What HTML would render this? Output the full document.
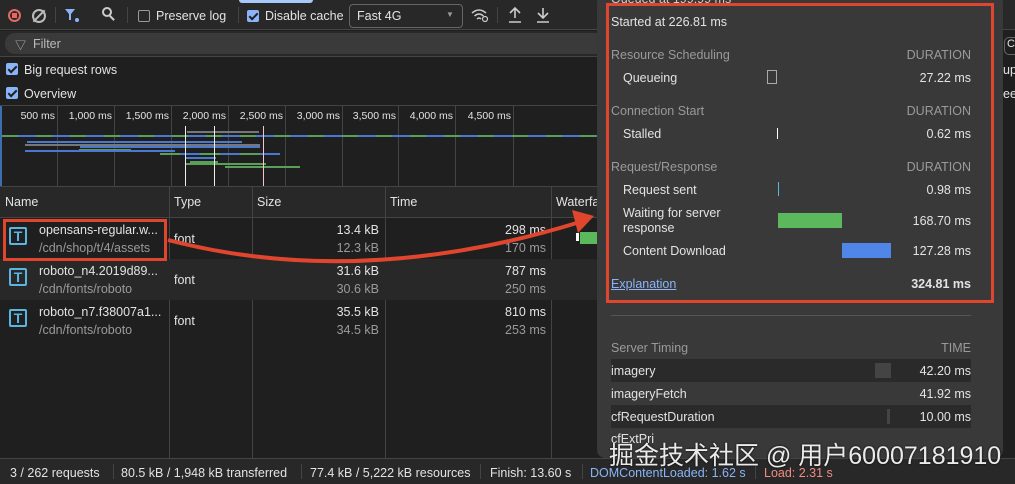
<!DOCTYPE html>
<html><head><meta charset="utf-8"><style>
*{box-sizing:border-box;margin:0;padding:0}
body{width:1015px;height:484px;overflow:hidden;background:#1f1f1f;font-family:"Liberation Sans","Noto Sans CJK SC",sans-serif;font-size:12.5px;color:#e3e3e3;position:relative}
.a{position:absolute;white-space:nowrap}
.r{position:absolute;white-space:nowrap;text-align:right}
.vl{position:absolute;width:1px;background:#444}
.hl{position:absolute;height:1px;background:#444}
.cb{position:absolute;width:12px;height:12px;border-radius:2px;background:#8ab4f8}
.cb:after{content:"";position:absolute;left:4px;top:1px;width:3px;height:7px;border:solid #1f1f1f;border-width:0 2px 2px 0;transform:rotate(45deg)}
.ic{position:absolute;width:18px;height:18px;border:2px solid #5bb5e0;border-radius:2px;color:#5bb5e0;font-weight:bold;font-size:14px;text-align:center;line-height:14px}
.g{color:#9a9a9a}
.bar{position:absolute;height:2px}
</style></head><body>
<div class="a" style="left:0;top:0;width:1015px;height:30px;background:#282828;border-bottom:1px solid #444"></div>
<div class="a" style="left:239px;top:0;width:74px;height:3px;background:#a8c7fa;border-radius:0 0 4px 4px"></div>
<div class="a" style="left:8px;top:9px;width:13px;height:13px;border-radius:50%;border:2px solid #e46962"></div>
<div class="a" style="left:12px;top:13px;width:5px;height:5px;background:#e46962"></div>
<div class="a" style="left:32px;top:9px;width:14px;height:14px;border-radius:50%;border:2px solid #bbb"></div>
<div class="a" style="left:38px;top:8px;width:2px;height:16px;background:#bbb;transform:rotate(45deg)"></div>
<div class="vl" style="left:55px;top:7px;height:16px"></div>
<svg class="a" style="left:64px;top:8px" width="16" height="16"><path d="M1 1 H11 L7 6 V12 L5 12 V6 Z" fill="#8ab4f8"/><circle cx="13" cy="12" r="2" fill="#8ab4f8"/></svg>
<div class="a" style="left:102px;top:7px;width:10px;height:10px;border-radius:50%;border:2px solid #ccc"></div>
<div class="a" style="left:111px;top:15px;width:2px;height:6px;background:#ccc;transform:rotate(-45deg)"></div>
<div class="vl" style="left:127px;top:7px;height:16px"></div>
<div class="a" style="left:138px;top:10px;width:12px;height:12px;border:1px solid #999;border-radius:2px"></div>
<div class="a" style="left:156px;top:9px">Preserve log</div>
<div class="vl" style="left:238px;top:7px;height:16px"></div>
<div class="cb" style="left:247px;top:10px"></div>
<div class="a" style="left:265px;top:9px">Disable cache</div>
<div class="a" style="left:349px;top:4px;width:114px;height:24px;border:1px solid #666;border-radius:4px"></div>
<div class="a" style="left:357px;top:9px">Fast 4G</div>
<div class="a" style="left:446px;top:10px;font-size:8px;color:#999">▼</div>
<svg class="a" style="left:470px;top:7px" width="20" height="16"><path d="M2 6 Q9 0 16 6 M4.5 9 Q9 5 13.5 9 M7 12 Q9 10 11 12" fill="none" stroke="#ccc" stroke-width="1.5"/><circle cx="15" cy="12" r="2.5" fill="none" stroke="#ccc" stroke-width="1.2"/></svg>
<div class="vl" style="left:497px;top:7px;height:16px"></div>
<svg class="a" style="left:507px;top:6px" width="16" height="18"><path d="M8 2 V12 M3 7 L8 2 L13 7 M2 16 H14" fill="none" stroke="#ccc" stroke-width="1.6"/></svg>
<svg class="a" style="left:535px;top:6px" width="16" height="18"><path d="M8 2 V12 M3 7 L8 12 L13 7 M2 16 H14" fill="none" stroke="#ccc" stroke-width="1.6"/></svg>
<div class="a" style="left:0;top:31px;width:1015px;height:26px;background:#282828;border-bottom:1px solid #444"></div>
<div class="a" style="left:5px;top:33px;width:600px;height:21px;background:#3a3a3a;border-radius:10px"></div>
<div class="a" style="left:15px;top:37px;color:#bbb;font-size:11px">▽</div>
<div class="a" style="left:33px;top:37px;color:#bbb">Filter</div>
<div class="cb" style="left:6px;top:63px"></div>
<div class="a" style="left:24px;top:63px">Big request rows</div>
<div class="cb" style="left:6px;top:87px"></div>
<div class="a" style="left:24px;top:87px">Overview</div>
<div class="hl" style="left:0;top:105px;width:600px"></div>
<div class="a" style="left:0;top:106px;width:2px;height:80px;background:#3b6fb0"></div>
<div class="vl" style="left:57px;top:106px;height:80px"></div>
<div class="vl" style="left:114px;top:106px;height:80px"></div>
<div class="vl" style="left:171px;top:106px;height:80px"></div>
<div class="vl" style="left:228px;top:106px;height:80px"></div>
<div class="vl" style="left:285px;top:106px;height:80px"></div>
<div class="vl" style="left:342px;top:106px;height:80px"></div>
<div class="vl" style="left:398px;top:106px;height:80px"></div>
<div class="vl" style="left:455px;top:106px;height:80px"></div>
<div class="vl" style="left:513px;top:106px;height:80px"></div>
<div class="r" style="right:960px;top:110px;font-size:10.5px">500 ms</div>
<div class="r" style="right:903px;top:110px;font-size:10.5px">1,000 ms</div>
<div class="r" style="right:846px;top:110px;font-size:10.5px">1,500 ms</div>
<div class="r" style="right:789px;top:110px;font-size:10.5px">2,000 ms</div>
<div class="r" style="right:732px;top:110px;font-size:10.5px">2,500 ms</div>
<div class="r" style="right:675px;top:110px;font-size:10.5px">3,000 ms</div>
<div class="r" style="right:619px;top:110px;font-size:10.5px">3,500 ms</div>
<div class="r" style="right:562px;top:110px;font-size:10.5px">4,000 ms</div>
<div class="r" style="right:504px;top:110px;font-size:10.5px">4,500 ms</div>
<div class="bar" style="left:2px;top:135px;width:598px;background:repeating-linear-gradient(90deg,#5a9e5a 0 16px,#4a78d0 16px 34px)"></div>
<div class="bar" style="left:187px;top:131px;width:72px;background:#777"></div>
<div class="bar" style="left:27px;top:141px;width:215px;background:#4a78d0"></div>
<div class="bar" style="left:25px;top:144px;width:235px;background:#777"></div>
<div class="bar" style="left:80px;top:146px;width:180px;background:#4a78d0"></div>
<div class="bar" style="left:79px;top:149px;width:52px;background:#5a9e5a"></div>
<div class="bar" style="left:25px;top:150px;width:150px;background:#4a78d0"></div>
<div class="bar" style="left:160px;top:153px;width:120px;background:repeating-linear-gradient(90deg,#5a9e5a 0 20px,#4a78d0 20px 40px)"></div>
<div class="bar" style="left:186px;top:157px;width:30px;background:#4a78d0"></div>
<div class="bar" style="left:190px;top:161px;width:28px;background:#5a9e5a"></div>
<div class="bar" style="left:186px;top:163px;width:80px;background:#5a9e5a"></div>
<div class="bar" style="left:225px;top:166px;width:75px;background:#5a9e5a"></div>
<div class="a" style="left:185px;top:126px;width:1px;height:60px;background:#eee"></div>
<div class="a" style="left:214px;top:126px;width:1px;height:60px;background:#eee"></div>
<div class="a" style="left:263px;top:126px;width:1px;height:60px;background:#f4c7c7"></div>
<div class="hl" style="left:0;top:186px;width:600px"></div>
<div class="a" style="left:0;top:187px;width:600px;height:31px;background:#282828;border-bottom:1px solid #444"></div>
<div class="vl" style="left:169px;top:187px;height:278px"></div>
<div class="vl" style="left:252px;top:187px;height:278px"></div>
<div class="vl" style="left:385px;top:187px;height:278px"></div>
<div class="vl" style="left:551px;top:187px;height:278px"></div>
<div class="a" style="left:5px;top:195px">Name</div>
<div class="a" style="left:174px;top:195px">Type</div>
<div class="a" style="left:257px;top:195px">Size</div>
<div class="a" style="left:390px;top:195px">Time</div>
<div class="a" style="left:556px;top:195px">Waterfa</div>
<div class="a" style="left:0;top:259px;width:600px;height:41px;background:#282828"></div>
<div class="ic" style="left:9px;top:227px">T</div>
<div class="a" style="left:39px;top:223px">opensans-regular.w...</div>
<div class="a g" style="left:39px;top:241px">/cdn/shop/t/4/assets</div>
<div class="a" style="left:174px;top:232px">font</div>
<div class="r" style="right:636px;top:223px">13.4 kB</div>
<div class="r g" style="right:636px;top:241px">12.3 kB</div>
<div class="r" style="right:469px;top:223px">298 ms</div>
<div class="r g" style="right:469px;top:241px">170 ms</div>
<div class="a" style="left:576px;top:233px;width:3px;height:8px;background:#fff"></div>
<div class="a" style="left:580px;top:232px;width:20px;height:12px;background:#5cb85c"></div>
<div class="ic" style="left:9px;top:268px">T</div>
<div class="a" style="left:39px;top:264px">roboto_n4.2019d89...</div>
<div class="a g" style="left:39px;top:282px">/cdn/fonts/roboto</div>
<div class="a" style="left:174px;top:273px">font</div>
<div class="r" style="right:636px;top:264px">31.6 kB</div>
<div class="r g" style="right:636px;top:282px">30.6 kB</div>
<div class="r" style="right:469px;top:264px">787 ms</div>
<div class="r g" style="right:469px;top:282px">250 ms</div>
<div class="ic" style="left:9px;top:309px">T</div>
<div class="a" style="left:39px;top:305px">roboto_n7.f38007a1...</div>
<div class="a g" style="left:39px;top:323px">/cdn/fonts/roboto</div>
<div class="a" style="left:174px;top:314px">font</div>
<div class="r" style="right:636px;top:305px">35.5 kB</div>
<div class="r g" style="right:636px;top:323px">34.5 kB</div>
<div class="r" style="right:469px;top:305px">810 ms</div>
<div class="r g" style="right:469px;top:323px">253 ms</div>
<div class="a" style="left:3px;top:219px;width:164px;height:42px;border:3px solid #e0452e"></div>
<div class="a" style="left:0;top:458px;width:1015px;height:26px;background:#282828;border-top:1px solid #444"></div>
<div class="a" style="left:10px;top:466px">3 / 262 requests</div>
<div class="vl" style="left:113px;top:464px;height:15px"></div>
<div class="a" style="left:121px;top:466px">80.5 kB / 1,948 kB transferred</div>
<div class="vl" style="left:301px;top:464px;height:15px"></div>
<div class="a" style="left:310px;top:466px">77.4 kB / 5,222 kB resources</div>
<div class="vl" style="left:480px;top:464px;height:15px"></div>
<div class="a" style="left:490px;top:466px">Finish: 13.60 s</div>
<div class="vl" style="left:582px;top:464px;height:15px"></div>
<div class="a" style="left:590px;top:466px;color:#8ab4f8">DOMContentLoaded: 1.62 s</div>
<div class="vl" style="left:755px;top:464px;height:15px"></div>
<div class="a" style="left:764px;top:466px;color:#f28b82">Load: 2.31 s</div>
<div class="a" style="left:1000px;top:30px;width:15px;height:428px;background:#1f1f1f"></div>
<div class="a" style="left:1004px;top:37px;width:14px;height:18px;border:1px solid #666;border-radius:5px 0 0 5px;font-size:11px;padding-left:2px">C</div>
<div class="a" style="left:1003px;top:63px">up</div>
<div class="a" style="left:1003px;top:87px">ee</div>
<div class="a" style="left:597px;top:-6px;width:406px;height:464px;background:#393939;border-radius:8px"></div>
<div class="a" style="left:611px;top:-8px;color:#ccc">Queued at 199.99 ms</div>
<div class="a" style="left:606px;top:3px;width:388px;height:300px;border:3px solid #e0452e"></div>
<div class="a" style="left:611px;top:15px">Started at 226.81 ms</div>
<div class="a g" style="left:611px;top:48px">Resource Scheduling</div>
<div class="r g" style="right:44px;top:48px">DURATION</div>
<div class="a" style="left:623px;top:71px">Queueing</div>
<div class="a" style="left:767px;top:70px;width:10px;height:14px;border:1px solid #aaa"></div>
<div class="r" style="right:44px;top:71px">27.22 ms</div>
<div class="a g" style="left:611px;top:104px">Connection Start</div>
<div class="r g" style="right:44px;top:104px">DURATION</div>
<div class="a" style="left:623px;top:127px">Stalled</div>
<div class="a" style="left:777px;top:128px;width:1px;height:11px;background:#fff"></div>
<div class="r" style="right:44px;top:127px">0.62 ms</div>
<div class="a g" style="left:611px;top:160px">Request/Response</div>
<div class="r g" style="right:44px;top:160px">DURATION</div>
<div class="a" style="left:623px;top:183px">Request sent</div>
<div class="a" style="left:778px;top:182px;width:1px;height:14px;background:#5bb5e0"></div>
<div class="r" style="right:44px;top:183px">0.98 ms</div>
<div class="a" style="left:623px;top:206px">Waiting for server</div>
<div class="a" style="left:623px;top:221px">response</div>
<div class="a" style="left:778px;top:213px;width:64px;height:15px;background:#5cb85c"></div>
<div class="r" style="right:44px;top:214px">168.70 ms</div>
<div class="a" style="left:623px;top:244px">Content Download</div>
<div class="a" style="left:842px;top:243px;width:49px;height:15px;background:#4f86e8"></div>
<div class="r" style="right:44px;top:244px">127.28 ms</div>
<div class="a" style="left:611px;top:277px;color:#8ab4f8;text-decoration:underline">Explanation</div>
<div class="r" style="right:44px;top:277px;font-weight:bold">324.81 ms</div>
<div class="hl" style="left:611px;top:315px;width:360px;background:#555"></div>
<div class="a g" style="left:611px;top:341px">Server Timing</div>
<div class="r g" style="right:44px;top:341px">TIME</div>
<div class="a" style="left:611px;top:359px;width:360px;height:23px;background:#2a2a2a"></div>
<div class="a" style="left:875px;top:363px;width:16px;height:15px;background:#444"></div>
<div class="a" style="left:611px;top:364px">imagery</div>
<div class="r" style="right:44px;top:364px">42.20 ms</div>
<div class="a" style="left:611px;top:387px">imageryFetch</div>
<div class="r" style="right:44px;top:387px">41.92 ms</div>
<div class="a" style="left:611px;top:405px;width:360px;height:23px;background:#2a2a2a"></div>
<div class="a" style="left:887px;top:409px;width:3px;height:15px;background:#444"></div>
<div class="a" style="left:611px;top:410px">cfRequestDuration</div>
<div class="r" style="right:44px;top:410px">10.00 ms</div>
<div class="a" style="left:611px;top:432px">cfExtPri</div>
<svg class="a" style="left:0;top:0" width="1015" height="484"><path d="M168 240 Q360 290 580 222" fill="none" stroke="#e0452e" stroke-width="4"/><path d="M594 216 L572 210 L578 233 Z" fill="#e0452e"/></svg>
<div class="a" style="left:609px;top:436px;font-size:25px;color:#fff;opacity:.9;text-shadow:0 0 2px #000">掘金技术社区 @ 用户60007181910</div>
</body></html>
